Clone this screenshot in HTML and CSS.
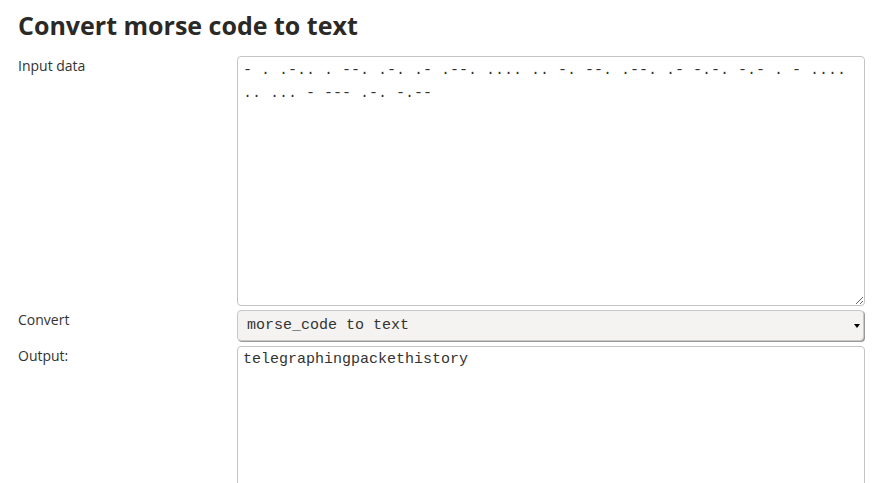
FILE: index.html
```html
<!DOCTYPE html>
<html>
<head>
<meta charset="utf-8">
<link rel="stylesheet" href="styles.css">
</head>
<body>
<div class="page">
  <h1 class="title">Convert morse code to text</h1>
  <div class="form">
    <label class="label" for="inp">Input data</label>
    <textarea id="inp" class="field input">- . .-.. . --. .-. .- .--. .... .. -. --. .--. .- -.-. -.- . - .... .. ... - --- .-. -.--</textarea>
    <label class="label label-convert" for="conv">Convert</label>
    <div class="select-wrap">
      <select id="conv" class="select">
        <option>morse_code to text</option>
      </select>
      <span class="arrow"></span>
    </div>
    <label class="label label-output" for="out">Output:</label>
    <textarea id="out" class="field output">telegraphingpackethistory</textarea>
  </div>
</div>
</body>
</html>
```

FILE: styles.css
```css
html, body {
  margin: 0;
  padding: 0;
  background: #fff;
  overflow: hidden;
}
.page {
  padding: 0 26px 0 18px;
  font-family: "Open Sans", "Liberation Sans", sans-serif;
  color: #333;
}
.title {
  margin: 0;
  padding-top: 9px;
  height: 56px;
  box-sizing: border-box;
  font-size: 25px;
  line-height: 32px;
  font-weight: 700;
  color: #2b2925;
}
.form {
  display: grid;
  grid-template-columns: 219px 628px;
  row-gap: 4px;
}
.label {
  font-size: 14px;
  line-height: 20px;
  padding-top: 0;
  color: #333;
}
.field {
  box-sizing: border-box;
  width: 628px;
  margin: 0;
  border: 1px solid #c4c4c4;
  border-radius: 4px;
  font-family: "Liberation Mono", "Courier New", monospace;
  font-size: 15px;
  line-height: 23px;
  color: #333;
  padding: 2px 5px;
  background: #fff;
  outline: none;
}
.input {
  height: 250px;
  resize: vertical;
}
.output {
  height: 160px;
  padding-top: 1px;
}
.select-wrap {
  position: relative;
  width: 628px;
  height: 32px;
}
.select {
  appearance: none;
  -webkit-appearance: none;
  box-sizing: border-box;
  width: 627px;
  height: 31px;
  margin: 0;
  border: 1px solid #c8c8c8;
  border-radius: 4px;
  box-shadow: 1px 1px 0 #9a9a9a;
  background: #f4f3f1;
  font-family: "Liberation Mono", "Courier New", monospace;
  font-size: 15px;
  color: #333;
  padding: 0 9px;
  outline: none;
}
.arrow {
  position: absolute;
  right: 5px;
  top: 14px;
  width: 0;
  height: 0;
  border-left: 3px solid transparent;
  border-right: 3px solid transparent;
  border-top: 4px solid #000;
}
```
